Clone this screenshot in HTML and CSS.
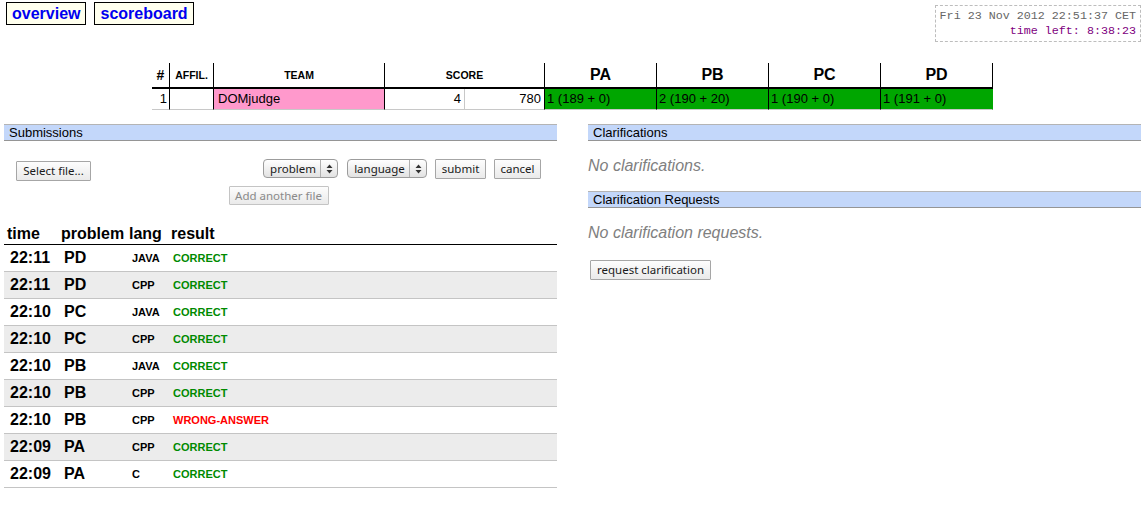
FILE: index.html
```html
<!DOCTYPE html>
<html>
<head>
<meta charset="utf-8">
<title>DOMjudge team overview</title>
<link rel="stylesheet" href="styles.css">
</head>
<body>
<div class="top">
  <nav class="menu">
    <a class="menu-link" href="#">overview</a>
    <a class="menu-link" href="#">scoreboard</a>
  </nav>
  <div class="clock">
    <div class="clock-now">Fri 23 Nov 2012 22:51:37 CET</div>
    <div class="clock-left">time left: 8:38:23</div>
  </div>
</div>

<table class="scoreboard">
  <colgroup>
    <col class="w-rank"><col class="w-affil"><col class="w-team"><col class="w-score"><col class="w-score"><col class="w-prob"><col class="w-prob"><col class="w-prob"><col class="w-prob">
  </colgroup>
  <thead>
    <tr>
      <th class="h-rank">#</th>
      <th class="h-small">AFFIL.</th>
      <th class="h-small">TEAM</th>
      <th class="h-small" colspan="2">SCORE</th>
      <th class="h-prob">PA</th>
      <th class="h-prob">PB</th>
      <th class="h-prob">PC</th>
      <th class="h-prob">PD</th>
    </tr>
  </thead>
  <tbody>
    <tr>
      <td class="rank">1</td>
      <td></td>
      <td class="team">DOMjudge</td>
      <td class="score score-solved">4</td>
      <td class="score">780</td>
      <td class="correct">1 (189 + 0)</td>
      <td class="correct">2 (190 + 20)</td>
      <td class="correct">1 (190 + 0)</td>
      <td class="correct last">1 (191 + 0)</td>
    </tr>
  </tbody>
</table>

<div class="columns">
  <section class="col col-left">
    <h3 class="bar">Submissions</h3>
    <form class="submit-form">
      <div class="form-row">
        <button type="button" class="btn btn-file">Select file...</button>
        <div class="form-right">
          <span class="select select-problem"><span class="select-label">problem</span><span class="select-arrows"><svg width="7" height="10" viewBox="0 0 7 10"><path d="M0.5 4 L3.5 0.5 L6.5 4 Z M0.5 6 L6.5 6 L3.5 9.5 Z" fill="#333"/></svg></span></span>
          <span class="select select-language"><span class="select-label">language</span><span class="select-arrows"><svg width="7" height="10" viewBox="0 0 7 10"><path d="M0.5 4 L3.5 0.5 L6.5 4 Z M0.5 6 L6.5 6 L3.5 9.5 Z" fill="#333"/></svg></span></span>
          <button type="button" class="btn btn-submit">submit</button>
          <button type="button" class="btn btn-cancel">cancel</button>
        </div>
      </div>
      <div class="form-row2">
        <button type="button" class="btn btn-disabled" disabled>Add another file</button>
      </div>
    </form>

    <table class="subs">
      <colgroup><col class="w-time"><col class="w-problem"><col class="w-lang"><col></colgroup>
      <thead>
        <tr><th>time</th><th>problem</th><th>lang</th><th>result</th></tr>
      </thead>
      <tbody>
        <tr><td class="t">22:11</td><td class="p">PD</td><td class="l">JAVA</td><td class="r ok">CORRECT</td></tr>
        <tr><td class="t">22:11</td><td class="p">PD</td><td class="l">CPP</td><td class="r ok">CORRECT</td></tr>
        <tr><td class="t">22:10</td><td class="p">PC</td><td class="l">JAVA</td><td class="r ok">CORRECT</td></tr>
        <tr><td class="t">22:10</td><td class="p">PC</td><td class="l">CPP</td><td class="r ok">CORRECT</td></tr>
        <tr><td class="t">22:10</td><td class="p">PB</td><td class="l">JAVA</td><td class="r ok">CORRECT</td></tr>
        <tr><td class="t">22:10</td><td class="p">PB</td><td class="l">CPP</td><td class="r ok">CORRECT</td></tr>
        <tr><td class="t">22:10</td><td class="p">PB</td><td class="l">CPP</td><td class="r wrong">WRONG-ANSWER</td></tr>
        <tr><td class="t">22:09</td><td class="p">PA</td><td class="l">CPP</td><td class="r ok">CORRECT</td></tr>
        <tr><td class="t">22:09</td><td class="p">PA</td><td class="l">C</td><td class="r ok">CORRECT</td></tr>
      </tbody>
    </table>
  </section>

  <section class="col col-right">
    <h3 class="bar">Clarifications</h3>
    <p class="empty">No clarifications.</p>
    <h3 class="bar">Clarification Requests</h3>
    <p class="empty">No clarification requests.</p>
    <button type="button" class="btn btn-request">request clarification</button>
  </section>
</div>
</body>
</html>
```

FILE: styles.css
```css
* { box-sizing: border-box; }

body {
  margin: 0;
  font-family: "Liberation Sans", Arial, Helvetica, sans-serif;
  color: #000;
  background: #fff;
}

/* top bar */
.top {
  display: flex;
  justify-content: space-between;
  align-items: flex-start;
}
.menu {
  display: flex;
  gap: 8px;
  margin: 2px 0 0 6px;
}
.menu-link {
  display: block;
  height: 23px;
  line-height: 21px;
  padding: 0 5px;
  border: 1px solid #000;
  background: #ffffee;
  color: #0000f0;
  font-weight: bold;
  font-size: 16px;
  text-decoration: none;
}
.clock {
  margin: 5px 7px 0 0;
  padding: 3px 4px 2px;
  border: 1px dashed #bdbdbd;
  font-family: "Liberation Mono", "Courier New", monospace;
  font-size: 11.7px;
  line-height: 15px;
  text-align: right;
  white-space: nowrap;
}
.clock-now { color: #666666; }
.clock-left { color: #800080; }

/* scoreboard */
.scoreboard {
  margin: 21px 0 0 152px;
  border-collapse: separate;
  border-spacing: 0;
  table-layout: fixed;
  width: 841px;
}
.w-rank { width: 18px; }
.w-affil { width: 44px; }
.w-team { width: 171px; }
.w-score { width: 80px; }
.w-prob { width: 112px; }

.scoreboard th,
.scoreboard td {
  padding: 0;
  border-right: 1px solid #000;
  white-space: nowrap;
  overflow: hidden;
}
.scoreboard th {
  line-height: 24px;
  border-bottom: 2px solid #000;
  font-weight: bold;
  text-align: center;
  vertical-align: middle;
}
.h-rank { font-size: 14px; }
.h-small { font-size: 10.5px; }
.h-prob { font-size: 16px; }

.scoreboard td {
  font-size: 13px;
  line-height: 20px;
  border-bottom: 1px solid #c8c8c8;
}
.scoreboard .rank { text-align: right; padding-right: 2px; }
.scoreboard .team { background: #ff99cc; padding-left: 4px; }
.scoreboard .score { text-align: right; padding-right: 3px; }
.scoreboard .score-solved { border-right-color: #c8c8c8; }
.scoreboard .correct { background: #00a600; padding-left: 2px; }
.scoreboard .last { border-right-color: #00a600; }

/* two columns */
.columns {
  display: flex;
  align-items: flex-start;
  margin-top: 14px;
}
.col { width: 553px; }
.col-left { margin-left: 4px; }
.col-right { margin-left: 31px; }

.bar {
  margin: 0;
  padding: 0 5px;
  font-size: 13px;
  font-weight: normal;
  line-height: 15px;
  background: #c3d7fa;
  border-top: 1px solid #b4b4b4;
  border-bottom: 1px solid #959595;
}

/* form controls */
.btn {
  display: inline-block;
  height: 20px;
  padding: 0;
  font-family: "Lucida Grande", "Noto Sans", "DejaVu Sans", sans-serif;
  font-size: 11.5px;
  line-height: 18px;
  color: #1a1a1a;
  text-align: center;
  white-space: nowrap;
  border: 1px solid #a6a6a6;
  border-radius: 1px;
  background: linear-gradient(#fdfdfd, #eaeaea);
}
.btn-file { width: 75px; margin-top: 2px; }
.btn-submit { width: 51px; }
.btn-cancel { width: 47px; }
.btn-request { width: 121px; margin-left: 2px; }
.btn-disabled {
  width: 100px;
  height: 19px;
  line-height: 17px;
  color: #8a8a8a;
  border-color: #c4c4c4;
}

.submit-form { padding: 18px 16px 0 12px; }
.form-row {
  display: flex;
  justify-content: space-between;
  align-items: flex-start;
}
.form-right {
  display: flex;
  align-items: flex-start;
  gap: 8px;
}
.select {
  display: inline-flex;
  height: 19px;
  border: 1px solid #9c9c9c;
  border-radius: 4px;
  background: linear-gradient(#ffffff, #e2e2e2);
  font-family: "Lucida Grande", "Noto Sans", "DejaVu Sans", sans-serif;
  font-size: 11.5px;
  line-height: 17px;
  color: #1a1a1a;
}
.select-problem { width: 75px; margin-right: 1px; }
.select-language { width: 80px; }
.select-label {
  flex: 1;
  text-align: center;
  padding-left: 2px;
}
.select-arrows {
  width: 17px;
  display: flex;
  align-items: center;
  justify-content: center;
  border-left: 1px solid #b0b0b0;
}
.form-row2 {
  display: flex;
  justify-content: center;
  margin-top: 5px;
}

/* submissions table */
.subs {
  width: 553px;
  margin-top: 19px;
  border-collapse: separate;
  border-spacing: 0;
  table-layout: fixed;
}
.w-time { width: 54px; }
.w-problem { width: 68px; }
.w-lang { width: 42px; }
.subs th {
  padding: 0 0 0 3px;
  font-size: 16px;
  font-weight: bold;
  line-height: 20px;
  text-align: left;
  border-bottom: 1px solid #000;
  white-space: nowrap;
}
.subs td {
  padding: 0 0 0 6px;
  line-height: 26px;
  font-weight: bold;
  border-bottom: 1px solid #c4c4c4;
  white-space: nowrap;
}
.subs tbody tr:nth-child(even) td { background: #ececec; }
.subs .t, .subs .p { font-size: 16px; }
.subs .l, .subs .r { font-size: 11px; }
.subs .r { padding-left: 5px; }
.subs .ok { color: #008a00; }
.subs .wrong { color: #ff0000; }

/* clarifications */
.empty {
  margin: 16px 0 16px;
  font-size: 16px;
  line-height: 18px;
  font-style: italic;
  color: #808080;
}
.col-right .empty + .btn { margin-top: 2px; }
```
